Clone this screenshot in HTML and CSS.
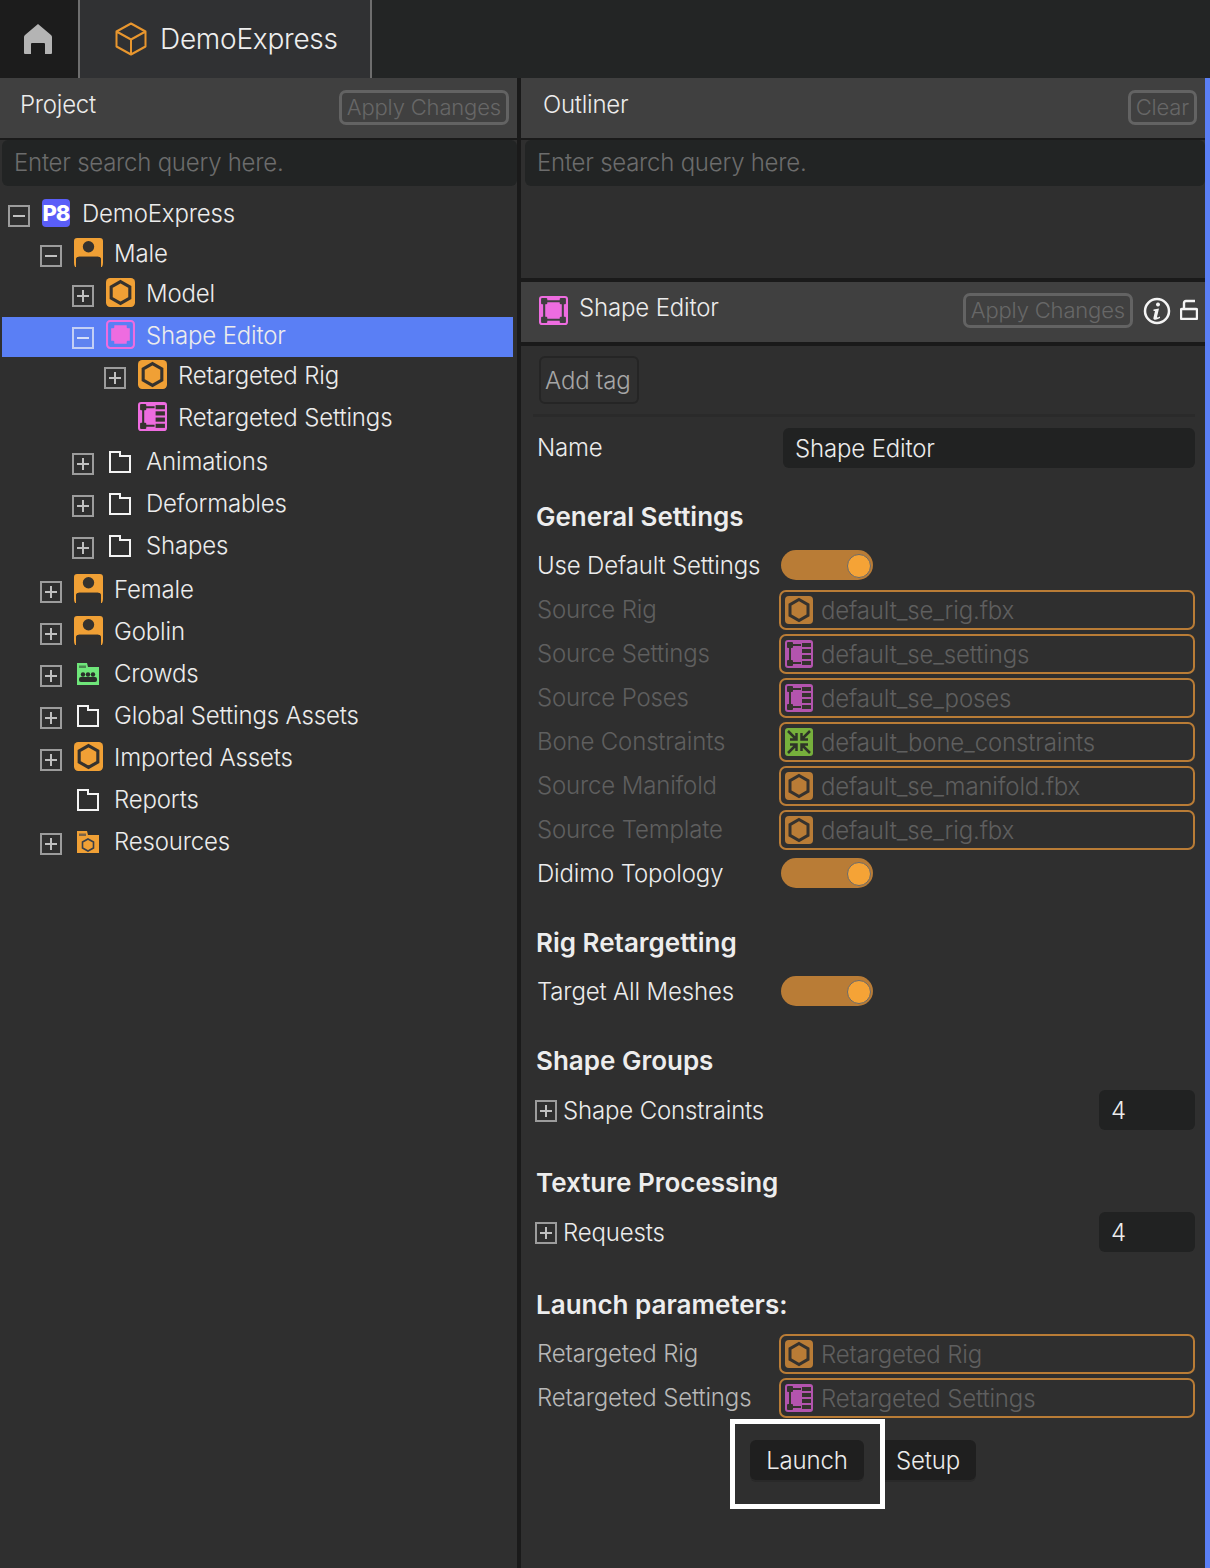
FILE: index.html
```html
<!DOCTYPE html>
<html lang="en">
<head>
<meta charset="utf-8">
<title>DemoExpress</title>
<link rel="stylesheet" href="styles.css">
</head>
<body>
<svg class="defs" width="0" height="0" aria-hidden="true">
  <defs>
    <symbol id="i-hex" viewBox="0 0 28 28">
      <rect x="0" y="0" width="28" height="28" rx="4" fill="currentColor"/>
      <path d="M14 3.500 23 8.700V19.300L14 24.500 5 19.300V8.700Z" fill="none" stroke="#35322e" stroke-width="3" stroke-linejoin="miter"/>
    </symbol>
    <symbol id="i-person" viewBox="0 0 28 28">
      <path d="M3 0H25Q28 0 28 3V24Q28 27 27 28H26V21Q26 18 23 18H5Q2 18 2 21V28H1Q0 27 0 24V3Q0 0 3 0Z" fill="#f0a035"/>
      <path d="M2 28V21Q2 18 5 18H23Q26 18 26 21V28Z" fill="#302f2e"/>
      <circle cx="14" cy="8.500" r="5.500" fill="#35322e"/>
    </symbol>
    <symbol id="i-shape" viewBox="0 0 28 28">
      <rect x="1" y="1" width="26" height="26" rx="3" fill="none" stroke="#ee6ce0" stroke-width="2"/>
      <rect x="5" y="5" width="18" height="18" rx="1" fill="#ee6ce0"/>
      <g fill="#5a7ff5"><rect x="3" y="3" width="5" height="5" rx="1"/><rect x="20" y="3" width="5" height="5" rx="1"/><rect x="3" y="20" width="5" height="5" rx="1"/><rect x="20" y="20" width="5" height="5" rx="1"/></g>
    </symbol>
    <symbol id="i-shape-head" viewBox="0 0 28 28">
      <rect x="0" y="0" width="28" height="28" rx="3" fill="#ee6ce0"/>
      <path d="M5 5H23V23H5Z" fill="none" stroke="#403f40" stroke-width="2"/>
      <g fill="#403f40"><rect x="2" y="2" width="6" height="6" rx="1"/><rect x="20" y="2" width="6" height="6" rx="1"/><rect x="2" y="20" width="6" height="6" rx="1"/><rect x="20" y="20" width="6" height="6" rx="1"/></g>
    </symbol>
    <symbol id="i-settings" viewBox="0 0 28 28">
      <rect x="0" y="0" width="28" height="28" rx="3" fill="currentColor"/>
      <path d="M5 5H16M5 5V23M5 23H16" fill="none" stroke="#35322e" stroke-width="2"/>
      <g fill="#35322e"><rect x="2" y="2" width="6" height="6" rx="1"/><rect x="2" y="20" width="6" height="6" rx="1"/><rect x="17" y="3" width="9" height="4"/><rect x="17" y="9" width="9" height="4"/><rect x="17" y="15" width="9" height="4"/><rect x="17" y="21" width="9" height="4"/></g>
    </symbol>
    <symbol id="i-arrows" viewBox="0 0 28 28">
      <rect x="0" y="0" width="28" height="28" rx="3" fill="#76b03c"/>
      <g fill="none" stroke="#2f3328" stroke-width="2.500"><path d="M3 3 11 11M5 11.500H11.500V5M25 3 17 11M23 11.500H16.500V5M3 25 11 17M5 16.500H11.500V23M25 25 17 17M23 16.500H16.500V23"/></g>
    </symbol>
    <symbol id="i-folder" viewBox="0 0 22 22">
      <path d="M1 21V1H11V5H21V21Z" fill="none" stroke="#f4f4f4" stroke-width="2"/>
    </symbol>
    <symbol id="i-crowds" viewBox="0 0 22 22">
      <path d="M0 22V0H10L11 4H22V22Z" fill="#6fe67a"/>
      <path d="M2 2.500H9V5H2Z" fill="#4a8a50"/>
      <g fill="#2a2e2a"><rect x="2" y="14" width="18" height="5" rx="2"/><circle cx="6" cy="11.500" r="2.200"/><circle cx="11" cy="11.500" r="2.200"/><circle cx="16" cy="11.500" r="2.200"/></g>
    </symbol>
    <symbol id="i-resources" viewBox="0 0 22 22">
      <path d="M0 22V0H10L11 4H22V22Z" fill="#f0a035"/>
      <path d="M2 2.500H9V5H2Z" fill="#7c6448"/>
      <path d="M11 8 16.500 11V17L11 20 5.500 17V11Z" fill="none" stroke="#3a3f48" stroke-width="1.600"/>
    </symbol>
  </defs>
</svg>

<header class="topbar">
  <div class="home">
    <svg class="home-icon" viewBox="0 0 28 30"><path d="M14 0 27 11Q28 12 28 13V29Q28 30 27 30H21V20Q21 19 20 19H8Q7 19 7 20V30H1Q0 30 0 29V13Q0 12 1 11Z" fill="#b4b4b4"/></svg>
  </div>
  <div class="tab">
    <svg class="cube" viewBox="0 0 32 34"><path d="M16 1.500 30.500 9.500V24.500L16 32.500 1.500 24.500V9.500ZM1.500 9.500 16 17.500 30.500 9.500M16 17.500V32.500" fill="none" stroke="#e8962e" stroke-width="2" stroke-linejoin="round"/></svg>
    <span class="tab-label">DemoExpress</span>
  </div>
</header>

<main class="main">
  <section class="left">
    <div class="panel-head">
      <span class="panel-title">Project</span>
      <span class="ghost-btn">Apply Changes</span>
    </div>
    <div class="search search-left">Enter search query here.</div>
    <ul class="tree">
      <li class="row l0 h40"><span class="exp minus"></span><span class="p8">P8</span><span>DemoExpress</span></li>
      <li class="row l1 h40"><span class="exp minus"></span><svg class="ic c-orange"><use href="#i-person"/></svg><span>Male</span></li>
      <li class="row l2 h40"><span class="exp plus"></span><svg class="ic c-orange"><use href="#i-hex"/></svg><span>Model</span></li>
      <li class="row l2 selected"><span class="exp minus"></span><svg class="ic"><use href="#i-shape"/></svg><span>Shape Editor</span></li>
      <li class="row l3 h40"><span class="exp plus"></span><svg class="ic c-orange"><use href="#i-hex"/></svg><span>Retargeted Rig</span></li>
      <li class="row l3 h44"><span class="exp none"></span><svg class="ic c-pink"><use href="#i-settings"/></svg><span>Retargeted Settings</span></li>
      <li class="row l2 h44"><span class="exp plus"></span><svg class="ic-f"><use href="#i-folder"/></svg><span>Animations</span></li>
      <li class="row l2 h40"><span class="exp plus"></span><svg class="ic-f"><use href="#i-folder"/></svg><span>Deformables</span></li>
      <li class="row l2 h44"><span class="exp plus"></span><svg class="ic-f"><use href="#i-folder"/></svg><span>Shapes</span></li>
      <li class="row l1 h44"><span class="exp plus"></span><svg class="ic c-orange"><use href="#i-person"/></svg><span>Female</span></li>
      <li class="row l1 h40"><span class="exp plus"></span><svg class="ic c-orange"><use href="#i-person"/></svg><span>Goblin</span></li>
      <li class="row l1 h44"><span class="exp plus"></span><svg class="ic-f"><use href="#i-crowds"/></svg><span>Crowds</span></li>
      <li class="row l1 h40"><span class="exp plus"></span><svg class="ic-f"><use href="#i-folder"/></svg><span>Global Settings Assets</span></li>
      <li class="row l1 h44"><span class="exp plus"></span><svg class="ic c-orange"><use href="#i-hex"/></svg><span>Imported Assets</span></li>
      <li class="row l1 h40"><span class="exp none"></span><svg class="ic-f"><use href="#i-folder"/></svg><span>Reports</span></li>
      <li class="row l1 h44"><span class="exp plus"></span><svg class="ic-f"><use href="#i-resources"/></svg><span>Resources</span></li>
    </ul>
  </section>

  <section class="right">
    <div class="panel-head">
      <span class="panel-title">Outliner</span>
      <span class="ghost-btn">Clear</span>
    </div>
    <div class="search search-right">Enter search query here.</div>
    <div class="outliner-empty"></div>

    <div class="panel-head editor-head">
      <svg class="ic head-ic"><use href="#i-shape-head"/></svg>
      <span class="editor-title">Shape Editor</span>
      <span class="ghost-btn">Apply Changes</span>
      <svg class="info" viewBox="0 0 28 28"><circle cx="14" cy="14" r="12" fill="none" stroke="#f4f4f4" stroke-width="2.500"/><path d="M15 5.500a2 2 0 1 0 .01 0ZM10.500 12.500 16 11.500 14 20Q14 21 17 19.500L17 21Q13 23.500 11 22.500 10 22 10.500 20.500L12 14 10.500 14Z" fill="#f4f4f4"/></svg>
      <svg class="lock" viewBox="0 0 18 21"><path d="M4 9V4Q4 2 6 2H15M2 10H16Q17 10 17 11V19Q17 20 16 20H2Q1 20 1 19V11Q1 10 2 10Z" fill="none" stroke="#f4f4f4" stroke-width="2.400"/></svg>
    </div>

    <div class="editor">
      <div class="tags"><span class="add-tag"><span class="nudge">Add tag</span></span></div>

      <div class="name-row">
        <span class="label">Name</span>
        <span class="dark-field"><span class="nudge">Shape Editor</span></span>
      </div>

      <h2 class="heading h-general">General Settings</h2>
      <div class="frow"><span class="label nudge">Use Default Settings</span><span class="toggle"></span></div>
      <div class="frow"><span class="label nudge dim">Source Rig</span><span class="ref"><svg class="ref-ic c-orange-d"><use href="#i-hex"/></svg><span class="ref-text">default_se_rig.fbx</span></span></div>
      <div class="frow"><span class="label nudge dim">Source Settings</span><span class="ref"><svg class="ref-ic c-purple"><use href="#i-settings"/></svg><span class="ref-text">default_se_settings</span></span></div>
      <div class="frow"><span class="label nudge dim">Source Poses</span><span class="ref"><svg class="ref-ic c-purple"><use href="#i-settings"/></svg><span class="ref-text">default_se_poses</span></span></div>
      <div class="frow"><span class="label nudge dim">Bone Constraints</span><span class="ref"><svg class="ref-ic"><use href="#i-arrows"/></svg><span class="ref-text">default_bone_constraints</span></span></div>
      <div class="frow"><span class="label nudge dim">Source Manifold</span><span class="ref"><svg class="ref-ic c-orange-d"><use href="#i-hex"/></svg><span class="ref-text">default_se_manifold.fbx</span></span></div>
      <div class="frow"><span class="label nudge dim">Source Template</span><span class="ref"><svg class="ref-ic c-orange-d"><use href="#i-hex"/></svg><span class="ref-text">default_se_rig.fbx</span></span></div>
      <div class="frow"><span class="label nudge">Didimo Topology</span><span class="toggle"></span></div>

      <h2 class="heading h-next">Rig Retargetting</h2>
      <div class="frow"><span class="label nudge">Target All Meshes</span><span class="toggle"></span></div>

      <h2 class="heading h-next">Shape Groups</h2>
      <div class="frow count-row"><span class="exp plus exp-inline"></span><span class="count-label nudge">Shape Constraints</span><span class="count"><span class="nudge">4</span></span></div>

      <h2 class="heading h-next2">Texture Processing</h2>
      <div class="frow count-row"><span class="exp plus exp-inline"></span><span class="count-label nudge">Requests</span><span class="count"><span class="nudge">4</span></span></div>

      <h2 class="heading h-next2">Launch parameters:</h2>
      <div class="frow"><span class="label nudge soft">Retargeted Rig</span><span class="ref"><svg class="ref-ic c-orange-d"><use href="#i-hex"/></svg><span class="ref-text">Retargeted Rig</span></span></div>
      <div class="frow"><span class="label nudge soft">Retargeted Settings</span><span class="ref"><svg class="ref-ic c-purple"><use href="#i-settings"/></svg><span class="ref-text">Retargeted Settings</span></span></div>

      <div class="actions">
        <span class="act-btn act-launch"><span class="nudge">Launch</span></span>
        <span class="act-btn act-setup"><span class="nudge">Setup</span></span>
        <span class="highlight"></span>
      </div>
    </div>
  </section>
  <div class="strip"></div>
</main>
</body>
</html>
```
FILE: styles.css
```css
* { box-sizing: border-box; }
html, body { margin: 0; padding: 0; }
body {
  width: 1210px;
  height: 1568px;
  overflow: hidden;
  background: #2f2f2f;
  color: #ececec;
  font-family: Inter, "Liberation Sans", sans-serif;
  font-size: 24px;
  font-weight: 300;
  letter-spacing: -0.16px;
  line-height: 30px;
}
.defs { position: absolute; }
.nudge { padding-top: 2px; }

/* top bar */
.topbar { display: flex; height: 78px; background: #232525; }
.home {
  width: 78px;
  padding-right: 2px;
  display: flex;
  align-items: center;
  justify-content: center;
  background: #1c1c1c;
}
.home-icon { width: 28px; height: 30px; }
.tab {
  width: 294px;
  display: flex;
  align-items: center;
  gap: 13px;
  padding-left: 35px;
  background: #303133;
  border-left: 2px solid #6e6e6e;
  border-right: 2px solid #6e6e6e;
}
.cube { width: 32px; height: 34px; }
.tab-label { font-size: 28px; letter-spacing: -0.25px; color: #eeeeee; }

.main { display: flex; height: 1490px; background: #1a1a1a; }
.left { width: 517px; background: #2f2f2f; }
.right { width: 684px; margin-left: 4px; background: #2f2f2f; }
.strip { width: 5px; background: #5a7ff5; }

/* panel headers */
.panel-head {
  height: 62px;
  display: flex;
  align-items: center;
  justify-content: space-between;
  padding: 0 8px 0 20px;
  background: #404040;
  border-bottom: 2px solid #1a1a1a;
}
.panel-title { font-size: 24px; letter-spacing: -0.25px; position: relative; top: -3px; }
.right > .panel-head:first-child { padding-left: 22px; }
.ghost-btn {
  height: 35px;
  padding: 0 5px;
  display: flex;
  align-items: center;
  position: relative;
  top: -1px;
  border: 3px solid #636363;
  border-radius: 7px;
  color: #676767;
  font-size: 22px;
}

.search {
  height: 46px;
  display: flex;
  align-items: center;
  background: #222424;
  color: #6c6c6c;
  letter-spacing: -0.25px;
  border-radius: 6px;
}
.search-left { margin-left: 2px; padding-left: 12px; }
.search-right { margin-left: 4px; padding-left: 12px; }
.outliner-empty { height: 96px; border-bottom: 4px solid #1a1a1a; }

/* tree */
.tree { margin: 8px 0 0; padding: 0; list-style: none; }
.row { display: flex; align-items: center; gap: 12px; margin-right: 4px; }
.l0 { padding-left: 8px; }
.l1 { padding-left: 40px; }
.l2 { padding-left: 72px; }
.l3 { padding-left: 104px; }
.h40 { height: 40px; }
.h44 { height: 44px; }
.selected {
  height: 40px;
  margin: 3px 4px -1px 2px;
  padding: 0 0 2px 70px;
  background: #5a7ff5;
}

.exp {
  position: relative;
  flex: none;
  width: 22px;
  height: 22px;
  top: 2px;
  border: 2px solid #9c9c9c;
}
.exp.none { border: 0; }
.exp.plus::before, .exp.minus::before {
  content: "";
  position: absolute;
  left: 3px;
  top: 8px;
  width: 12px;
  height: 2px;
  background: #c0c0c0;
}
.exp.plus::after {
  content: "";
  position: absolute;
  left: 8px;
  top: 3px;
  width: 2px;
  height: 12px;
  background: #c0c0c0;
}
.selected .exp { border-color: #c3cff5; background: #5f83f0; }
.selected .exp::before { background: #d6dff8; }

.ic { flex: none; width: 29px; height: 29px; margin: 0 -0.5px 3px; }
.ic-f { flex: none; width: 22px; height: 22px; margin: 0 3px; }
.c-orange { color: #f0a035; }
.c-pink { color: #ee6ce0; }
.c-orange-d { color: #b97c36; }
.c-purple { color: #b354ae; }
.p8 {
  flex: none;
  width: 28px;
  height: 28px;
  margin-bottom: 2px;
  border-radius: 4px;
  background: #5a5ef8;
  color: #ffffff;
  font-size: 22px;
  font-weight: 800;
  line-height: 28px;
  text-align: center;
  letter-spacing: -1px;
}

/* editor header */
.editor-head {
  height: 60px;
  justify-content: flex-start;
  padding: 0 0 0 18px;
  border-bottom: 0;
}
.editor-head .ghost-btn { top: -2px; }
.editor-title { margin-left: 12px; margin-right: auto; position: relative; top: -4px; }
.info { width: 28px; height: 28px; margin: 0 0 3px 10px; }
.lock { width: 18px; height: 21px; margin: 0 7px 5px 9px; }

/* editor body */
.editor { position: relative; border-top: 4px solid #1a1a1a; padding: 0 10px 0 16px; }
.tags {
  height: 71px;
  margin-left: -4px;
  padding: 10px 0 0 6px;
  border-bottom: 3px solid #2a2a2a;
}
.add-tag {
  display: inline-flex;
  align-items: center;
  height: 48px;
  padding: 0 6px 0 4px;
  border: 2px solid #252525;
  border-radius: 6px;
  color: #a6a6a6;
}
.name-row { display: flex; align-items: center; height: 40px; margin-top: 11px; }
.name-row .label { width: 246px; }
.dark-field {
  flex: 1;
  height: 40px;
  padding-left: 12px;
  display: flex;
  align-items: center;
  background: #212222;
  border-radius: 6px;
}
.label { flex: none; width: 242px; }
.dim { color: #5f5f5f; }
.soft { color: #b8b8b8; }
.heading {
  margin: 0 0 0 -1px;
  font-size: 26px;
  line-height: 30px;
  font-weight: 600;
  letter-spacing: 0;
  color: #ededed;
}
.h-general { margin-top: 34px; }
.h-next { margin-top: 33px; }
.h-next2 { margin-top: 38px; }
.frow { display: flex; align-items: center; height: 44px; }
.heading + .frow { margin-top: 11px; }
.heading + .count-row { margin-top: 14px; }

.toggle {
  position: relative;
  width: 92px;
  height: 30px;
  margin-left: 2px;
  border-radius: 15px;
  background: #b97c36;
}
.toggle::after {
  content: "";
  position: absolute;
  right: 2px;
  top: 4px;
  width: 22px;
  height: 22px;
  border-radius: 50%;
  background: #f5a336;
  border: 1.500px solid #6a6a6a;
}
.ref {
  flex: 1;
  height: 40px;
  margin-top: 2px;
  display: flex;
  align-items: center;
  gap: 8px;
  padding-left: 4px;
  border: 2px solid #b97c36;
  border-radius: 7px;
  color: #5f5f5f;
}
.ref-ic { flex: none; width: 28px; height: 28px; }
.ref-text { padding-top: 2px; }

.exp-inline { top: 1px; margin-left: -2px; }
.count-label { margin-left: 6px; }
.count {
  margin-left: auto;
  width: 96px;
  height: 40px;
  padding-left: 12px;
  display: flex;
  align-items: center;
  background: #212222;
  border-radius: 6px;
}
.count-row { height: 40px; }

.actions { position: relative; display: flex; gap: 16px; margin: 21px 0 0 213px; }
.act-btn {
  height: 40px;
  display: flex;
  align-items: center;
  justify-content: center;
  background: #1f1f1f;
  border-radius: 6px;
  box-shadow: 0 2px 0 #292929;
}
.act-launch { width: 114px; }
.act-setup { width: 96px; }
.highlight {
  position: absolute;
  left: -20px;
  top: -21px;
  width: 155px;
  height: 90px;
  border: 5px solid #ffffff;
  pointer-events: none;
}
```
